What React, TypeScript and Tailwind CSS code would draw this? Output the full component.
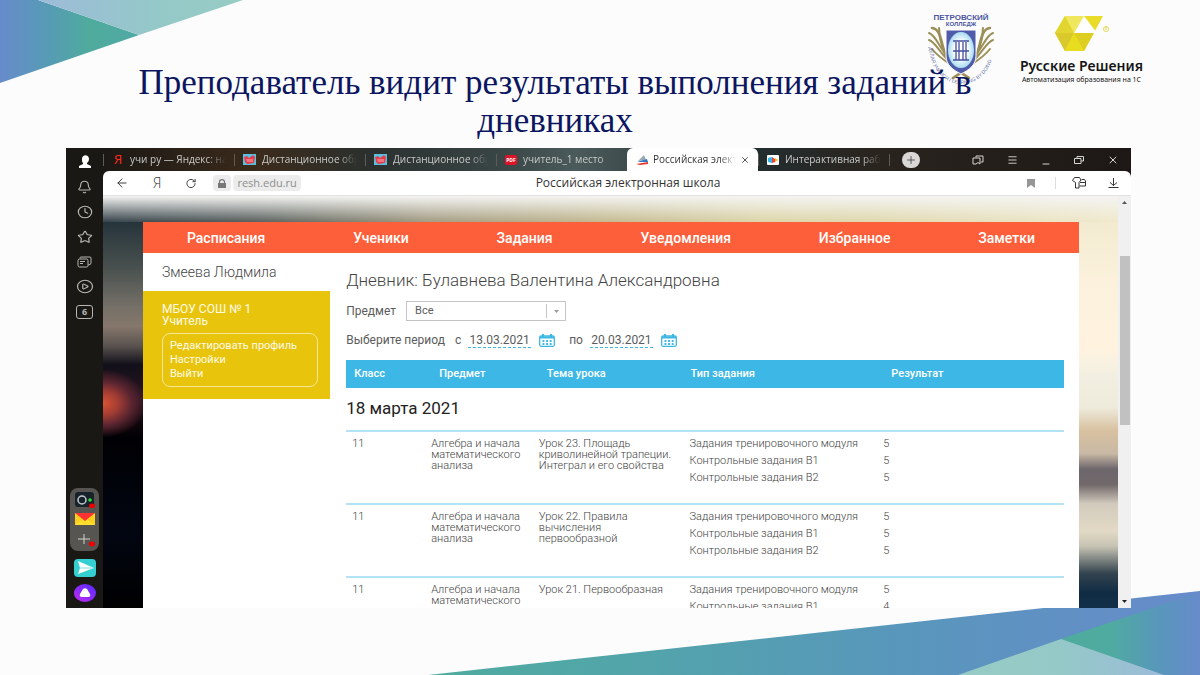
import { ReactNode } from 'react';
import { Bell, Clock, Star, CirclePlay, Plus, Menu, X, ArrowLeft, RotateCw, Download, Minus } from 'lucide-react';

const navItems = ['Расписания', 'Ученики', 'Задания', 'Уведомления', 'Избранное', 'Заметки'];

const lessons = [
    { grade: 11, subject: 'Алгебра и начала математического анализа', topic: 'Урок 23. Площадь криволинейной трапеции. Интеграл и его свойства', results: [5, 5, 5] },
    { grade: 11, subject: 'Алгебра и начала математического анализа', topic: 'Урок 22. Правила вычисления первообразной', results: [5, 5, 5] },
    { grade: 11, subject: 'Алгебра и начала математического анализа', topic: 'Урок 21. Первообразная', results: [5, 4, 5] },
];

const tasks = ['Задания тренировочного модуля', 'Контрольные задания В1', 'Контрольные задания В2'];

function Backdrop() {
    return (
        <>
            <svg className="absolute left-0 top-0 h-[84px] w-[244px]" viewBox="0 0 244 84" aria-hidden="true">
                <defs>
                    <linearGradient id="cornerDark">
                        <stop offset="0" stopColor="#678bcb" />
                        <stop offset="0.35" stopColor="#569bb5" />
                        <stop offset="0.65" stopColor="#4fab9c" />
                        <stop offset="1" stopColor="#50a9a6" />
                    </linearGradient>
                    <linearGradient id="cornerLight">
                        <stop offset="0" stopColor="#9dbbd9" />
                        <stop offset="0.6" stopColor="#94c9c8" />
                        <stop offset="1" stopColor="#97cbc4" />
                    </linearGradient>
                </defs>
                <path d="M0 0H38L139 35L0 83Z" fill="url(#cornerDark)" />
                <path d="M38 0H243L139 35Z" fill="url(#cornerLight)" />
            </svg>
            <svg className="absolute bottom-0 right-0 h-[85px] w-[772px]" viewBox="428 590 772 85" aria-hidden="true">
                <defs>
                    <linearGradient id="waveMain">
                        <stop offset="0" stopColor="#4fab9f" />
                        <stop offset="0.25" stopColor="#52a5a9" />
                        <stop offset="0.6" stopColor="#5897bb" />
                        <stop offset="1" stopColor="#678bcb" />
                    </linearGradient>
                    <linearGradient id="waveSide">
                        <stop offset="0" stopColor="#4fab9c" />
                        <stop offset="0.35" stopColor="#4fab9f" />
                        <stop offset="0.7" stopColor="#5897bb" />
                        <stop offset="1" stopColor="#678bcb" />
                    </linearGradient>
                    <linearGradient id="waveLight">
                        <stop offset="0" stopColor="#97cbc4" />
                        <stop offset="0.5" stopColor="#94c9c8" />
                        <stop offset="1" stopColor="#9dbbd9" />
                    </linearGradient>
                </defs>
                <path d="M428 675L1200 591V675Z" fill="url(#waveMain)" />
                <path d="M1061 639L1200 592V675H1130Z" fill="url(#waveSide)" />
                <path d="M958 675L1061 639L1164 675Z" fill="url(#waveLight)" />
            </svg>
        </>
    );
}

function CollegeEmblem() {
    return (
        <svg className="h-20 w-[76px]" viewBox="0 0 76 80" role="img" aria-label="Петровский колледж">
            <defs>
                <path id="motto" d="M3 33C3 61 20 74 35 74C52 74 68 61 68 33" />
                <radialGradient id="shieldGlow">
                    <stop offset="0.5" stopColor="#fff" />
                    <stop offset="1" stopColor="#a6dcf1" />
                </radialGradient>
            </defs>
            <g fill="#4c579f" fontFamily="Liberation Sans, sans-serif" fontWeight="700" textAnchor="middle">
                <text x="35" y="10" fontSize="8">ПЕТРОВСКИЙ</text>
                <text x="35" y="16" fontSize="6">КОЛЛЕДЖ</text>
            </g>
            <g transform="translate(-3 -2)">
                <g fill="none" stroke="#9b8f57" strokeLinecap="round">
                    <path d="M9 20C19 21 18 38 23 48C27 58 37 64 46 70" strokeWidth="2.6" />
                    <path d="M6 25C12 27 15 36 21 44M6 32C12 34 16 43 24 51M9 41C13 46 19 51 27 56M16 20C17 25 15 29 21 42" strokeWidth="2" />
                    <path d="M67 20C57 21 58 38 53 48C49 58 39 64 30 70" strokeWidth="2.6" />
                    <path d="M70 25C64 27 61 36 55 44M70 32C64 34 60 43 52 51M67 41C63 46 57 51 49 56M60 20C59 25 61 29 55 42" strokeWidth="2" />
                </g>
                <path d="M23 22H53V48C53 57 46 62 38 66C30 62 23 57 23 48Z" fill="#515bac" stroke="#fff" strokeWidth="1" />
                <ellipse cx="38" cy="42" rx="13" ry="18" fill="url(#shieldGlow)" />
                <path d="M30 33H46M30 52H46M33 34V52M36 34V52M40 34V52M43 34V52M30 43H46" fill="none" stroke="#454fa0" strokeWidth="1.3" />
            </g>
            <text fill="#7077aa" fontFamily="Liberation Sans, sans-serif" fontSize="5">
                <textPath href="#motto" startOffset="4">ДЕЛАЯ УЧИМСЯ / LEARNING BY DOING</textPath>
            </text>
        </svg>
    );
}

function CompanyLogo() {
    return (
        <div className="flex flex-col items-center font-['Noto_Sans',sans-serif] text-[#141414]">
            <svg className="ml-1 h-9 w-14" viewBox="0 0 56 36" aria-hidden="true">
                <path d="M10 0H48L29 35H10L0 17Z" fill="#e8dc28" />
                <path d="M10 0L19 17H0Z" fill="#e3d52f" />
                <path d="M10 0H29L19 17Z" fill="#efe75e" />
                <path d="M0 17H19L10 35Z" fill="#d9c92d" />
                <path d="M19 17L29 35H10Z" fill="#e9dd1f" />
                <path d="M19 17H39L29 35Z" fill="#dfce22" />
                <path d="M29 0L42 17H19Z" fill="#fff" />
                <circle cx="51" cy="13" r="2.6" fill="none" stroke="#e3d64c" strokeWidth="0.8" />
                <path d="M50.200 14.500V11.500H52V13H50.500L52 14.500" fill="none" stroke="#e3d64c" strokeWidth="0.6" />
            </svg>
            <strong className="mt-1 text-sm leading-5 font-semibold whitespace-nowrap">Русские Решения</strong>
            <span className="text-[7px] leading-2 whitespace-nowrap">Автоматизация образования на 1С</span>
        </div>
    );
}

function SideIcon({ label, children }: { label: string; children: ReactNode }) {
    return (
        <button aria-label={label} className="flex h-[25px] items-center justify-center text-[#b8b6b2]">
            {children}
        </button>
    );
}

function BrowserSidebar() {
    return (
        <aside className="flex w-[37px] shrink-0 flex-col items-stretch bg-[#1a1814] pt-px pb-[3px]">
            <SideIcon label="Профиль">
                <svg className="h-[13px] w-3" viewBox="0 0 12 13" fill="#fff"><path d="M3 4C3-1 10-1 10 4C10 6 9 7 8 8V9L12 11V13H0V11L4 9V8C3 7 3 6 3 4Z" /></svg>
            </SideIcon>
            <SideIcon label="Уведомления"><Bell className="h-[14px] w-[15px]" strokeWidth={1.8} preserveAspectRatio="none" /></SideIcon>
            <SideIcon label="История"><Clock className="h-[14px] w-4" strokeWidth={1.8} preserveAspectRatio="none" /></SideIcon>
            <SideIcon label="Избранное"><Star className="h-[14px] w-4" strokeWidth={1.8} preserveAspectRatio="none" /></SideIcon>
            <SideIcon label="Коллекции">
                <svg className="h-3 w-[15px]" viewBox="0 0 15 12" fill="none" stroke="currentColor"><rect x="1" y="3" width="10" height="8" rx="1.5" /><path d="M3 2.5V2Q3 1 4 1H13Q14 1 14 2V7Q14 9 11 9M3 5.5H8M3 7.5H6" /></svg>
            </SideIcon>
            <SideIcon label="Видео"><CirclePlay className="h-[15px] w-[18px]" strokeWidth={1.6} preserveAspectRatio="none" /></SideIcon>
            <SideIcon label="Открытые вкладки">
                <span className="flex h-[14px] w-[17px] items-center justify-center rounded-[3px] border border-current text-[9px] leading-3 font-bold">6</span>
            </SideIcon>
            <div className="mx-1 mt-auto mb-1 flex h-[63px] flex-col items-center justify-around rounded-lg bg-[#575551] py-px">
                <button aria-label="Камера">
                    <svg className="h-4 w-5" viewBox="0 0 20 16"><rect width="19" height="15" rx="3" fill="#17222b" /><circle cx="7" cy="8" r="4" fill="none" stroke="#c3ccd1" strokeWidth="1.5" /><circle cx="15" cy="8" r="1.8" fill="#23e03b" /><ellipse cx="17" cy="14" rx="3" ry="2.4" fill="#f10000" /></svg>
                </button>
                <button aria-label="Почта">
                    <svg className="h-3 w-5" viewBox="0 0 20 12"><path d="M0 0H20V12H0Z" fill="#ffcf1f" /><path d="M0 12L10 5L20 12Z" fill="#ffdf2b" /><path d="M0 0H20L10 8Z" fill="#f33" /></svg>
                </button>
                <button aria-label="Добавить">
                    <svg className="h-4 w-5" viewBox="0 0 20 16"><path d="M3 8H15M9 3V13" stroke="#d4d2cf" /><ellipse cx="17" cy="13" rx="3" ry="2.4" fill="#f10000" /></svg>
                </button>
            </div>
            <SideIcon label="Мессенджер">
                <svg className="h-[18px] w-[22px]" viewBox="0 0 22 18"><rect width="22" height="18" rx="4" fill="#34cfd0" /><path d="M4 2L20 9L4 15L6 9Z" fill="#fff" /><path d="M6 9H20" stroke="#7ce0e0" /></svg>
            </SideIcon>
            <SideIcon label="Алиса">
                <svg className="h-[18px] w-[22px]" viewBox="0 0 22 18">
                    <defs><linearGradient id="alice" y1="1" x2="0.8" y2="0"><stop stopColor="#c22af0" /><stop offset="1" stopColor="#5c2bff" /></linearGradient></defs>
                    <ellipse cx="11" cy="9" rx="11" ry="9" fill="url(#alice)" /><path d="M9 5Q11 3.500 13 5L16 10Q17 13 14 13H8Q5 13 6 10Z" fill="#fff" />
                </svg>
            </SideIcon>
        </aside>
    );
}

function Tab({ title, icon }: { title: string; icon: ReactNode }) {
    return (
        <button className="flex h-[23px] min-w-0 max-w-[131px] flex-1 items-center pr-2 text-[#c9cac8]">
            <span className="mr-2 h-3 w-px bg-[#5d5c57]" />
            {icon}
            <span className="ml-[6px] min-w-0 flex-1 overflow-hidden whitespace-nowrap text-left [mask-image:linear-gradient(to_right,black_80%,transparent)]">{title}</span>
        </button>
    );
}

function UchiIcon() {
    return (
        <svg className="h-[11px] w-[13px] shrink-0" viewBox="0 0 13 11">
            <path d="M0 0H13V11H0Z" fill="#5bc0df" />
            <path d="M1 3L4 2L6 4L10 1L12 3L11 9L4 10L2 8Z" fill="#e63c4c" />
            <path d="M3 5H10V8H4Z" fill="#f0767c" />
        </svg>
    );
}

function TabStrip() {
    return (
        <div className="flex h-[23px] text-[10px] font-['Open_Sans','Noto_Sans',sans-serif]">
            <Tab title="учи ру — Яндекс: на" icon={<b className="w-3 text-center text-[13px] font-normal text-[#ff2b1c]">Я</b>} />
            <Tab title="Дистанционное обр" icon={<UchiIcon />} />
            <Tab title="Дистанционное обр" icon={<UchiIcon />} />
            <Tab
                title="учитель_1 место"
                icon={<span className="h-[10px] w-3 shrink-0 rounded-[2px] bg-[#dd1327] text-center text-[5px] leading-[10px] font-bold text-white">PDF</span>}
            />
            <div className="flex h-[23px] min-w-0 max-w-[131px] flex-1 items-center gap-1 rounded-t-md bg-white pl-[9px] pr-2 text-[#333]">
                <svg className="h-[10px] w-[13px] shrink-0" viewBox="0 0 13 10"><path d="M2 6L8 0L10 5Z" fill="#9aa7b5" /><path d="M1 7L11 4L12 7Z" fill="#2c78c4" /><path d="M0 9L12 7V9L4 10Z" fill="#e6392c" /></svg>
                <span className="min-w-0 flex-1 overflow-hidden whitespace-nowrap [mask-image:linear-gradient(to_right,black_80%,transparent)]">Российская элект</span>
                <button aria-label="Закрыть вкладку"><X className="size-[10px]" /></button>
            </div>
            <Tab
                title="Интерактивная рабо"
                icon={<svg className="h-[10px] w-3 shrink-0" viewBox="0 0 12 10"><rect width="12" height="10" rx="1" fill="#fff" /><path d="M1 3L5 2V8L1 7Z" fill="#39b5e8" /><path d="M5 2L8 4V7L5 8Z" fill="#e8493e" /><path d="M8 3L11 5L8 7Z" fill="#f2b51d" /></svg>}
            />
            <div className="flex flex-1 items-center pr-3 text-[#d7d5d2]">
                <span className="mr-3 h-3 w-px bg-[#5d5c57]" />
                <button aria-label="Новая вкладка" className="flex h-4 w-[18px] items-center justify-center rounded-full bg-[#d9d8d6] text-[#333]"><Plus className="size-3" strokeWidth={1.5} /></button>
                <div className="ml-auto flex items-center gap-[23px]">
                    <button aria-label="Коллекции">
                        <svg className="h-[10px] w-3" viewBox="0 0 12 10" fill="none" stroke="currentColor"><path d="M4 2.500V1H11V7H9M1 3H8V9L6 7.500L4 9H1Z" /></svg>
                    </button>
                    <button aria-label="Меню"><Menu className="h-3 w-[11px]" strokeWidth={2} /></button>
                    <button aria-label="Свернуть" className="pt-2"><Minus className="h-2 w-[10px]" strokeWidth={3} preserveAspectRatio="none" /></button>
                    <button aria-label="Развернуть">
                        <svg className="h-2 w-[10px]" viewBox="0 0 10 8" fill="none" stroke="currentColor"><path d="M3 2.500V0.500H9.500V5H7M0.500 2.500H7V7.500H0.500Z" /></svg>
                    </button>
                    <button aria-label="Закрыть"><X className="size-3" /></button>
                </div>
            </div>
        </div>
    );
}

function AddressBar() {
    return (
        <div className="flex h-[25px] items-center rounded-t-md border-b border-[#e2e2e2] bg-white px-3 font-['Open_Sans','Noto_Sans',sans-serif] text-[#333]">
            <div className="flex flex-1 items-center">
                <button aria-label="Назад" className="mr-6"><ArrowLeft className="size-[14px]" strokeWidth={1.6} /></button>
                <button aria-label="Яндекс" className="mr-6 text-sm leading-5 font-light">Я</button>
                <button aria-label="Обновить" className="mr-4"><RotateCw className="h-[11px] w-3" strokeWidth={2} /></button>
                <span className="mr-[2px] flex h-4 w-[18px] items-center justify-center rounded bg-[#ececec]">
                    <svg className="h-[9px] w-2" viewBox="0 0 8 9"><path d="M0 4H8V9H0Z" fill="#777" /><path d="M1.500 4V3Q1.500 0.600 4 0.600Q6.500 0.600 6.500 3V4" fill="none" stroke="#777" strokeWidth="1.200" /></svg>
                </span>
                <a href="#resh" className="rounded bg-[#ececec] px-1 text-[11px] leading-4 text-[#8c8c8c]">resh.edu.ru</a>
            </div>
            <div className="ml-[22px] text-xs">Российская электронная школа</div>
            <div className="flex flex-1 items-center justify-end">
                <button aria-label="Закладка" className="mr-5"><svg className="h-[9px] w-2" viewBox="0 0 8 9" fill="#969696"><path d="M0 0H8V9L4 6L0 9Z" /></svg></button>
                <span className="mr-4 h-3 w-px bg-[#ddd]" />
                <button aria-label="Расширения" className="mr-[22px]">
                    <svg className="h-3 w-[14px]" viewBox="0 0 14 12" fill="none" stroke="currentColor"><path d="M2.500 0.500H7.500L9 3L7 5.500V11H3.500V5.500L0.500 3.500ZM9 3.500L10 2.500H12.500L13.500 4V9H7.500M8 5.500H13" /></svg>
                </button>
                <button aria-label="Загрузки">
                    <svg className="h-[10px] w-[11px]" viewBox="0 0 11 10" fill="none" stroke="currentColor"><path d="M5.500 0V7.500M2 4.500L5.500 7.500L9 4.500M0.500 9.500H10.500" /></svg>
                </button>
            </div>
        </div>
    );
}

function CalendarIcon() {
    return (
        <svg className="h-[13px] w-4" viewBox="0 0 16 13">
            <rect x="0.700" y="2" width="14.600" height="10.300" rx="1.500" fill="#fff" stroke="#3db7e4" strokeWidth="1.300" />
            <path d="M1 3.500H15M4 0V3M12 0V3" stroke="#3db7e4" strokeWidth="2" />
            <path d="M3.500 7H13M3.500 10H13" stroke="#3db7e4" strokeWidth="1.800" strokeDasharray="1.900 1.700" />
        </svg>
    );
}

function DateField({ id, label, value }: { id: string; label: string; value: string }) {
    return (
        <div className="flex items-center">
            <label htmlFor={id} className="mr-[7px]">{label}</label>
            <input id={id} defaultValue={value} className="mr-2 h-4 w-[63px] border-b border-dashed border-[#3db7e4] bg-transparent text-center text-xs outline-none" />
            <button aria-label="Открыть календарь"><CalendarIcon /></button>
        </div>
    );
}

function Diary() {
    return (
        <main className="min-w-0 flex-1 pt-[17px] pr-[15px] pl-4">
            <h2 className="text-[17px] leading-5 font-light">Дневник: Булавнева Валентина Александровна</h2>
            <div className="mt-[11px] flex items-center gap-[10px] text-xs leading-5 text-[#5c5c5c]">
                <label htmlFor="subject">Предмет</label>
                <div className="relative">
                    <select id="subject" className="block h-5 w-40 appearance-none border border-[#c4c4c4] bg-white pl-2 text-[11px] leading-4 outline-none">
                        <option>Все</option>
                    </select>
                    <span className="pointer-events-none absolute inset-y-[3px] right-0 flex w-5 items-center justify-center border-l border-[#c4c4c4]">
                        <svg className="h-[3px] w-[5px]" viewBox="0 0 5 3" fill="#999"><path d="M0 0H5L2.500 3Z" /></svg>
                    </span>
                </div>
            </div>
            <div className="mt-[9px] flex items-center text-xs leading-5 text-[#5c5c5c]">
                <span className="mr-[10px]">Выберите период</span>
                <DateField id="from" label="с" value="13.03.2021" />
                <span className="w-[14px]" />
                <DateField id="to" label="по" value="20.03.2021" />
            </div>
            <table className="mt-[10px] w-full table-fixed border-collapse text-left text-[11px] font-light">
                <colgroup>
                    <col className="w-[11%]" />
                    <col className="w-[15%]" />
                    <col className="w-[21%]" />
                    <col className="w-[27%]" />
                    <col className="w-[26%]" />
                </colgroup>
                <thead>
                    <tr className="h-7 bg-[#3db7e6] text-white">
                        <th className="pl-2 font-medium">Класс</th>
                        <th className="pl-[14px] font-medium">Предмет</th>
                        <th className="pl-[14px] font-medium">Тема урока</th>
                        <th className="pl-[7px] font-medium">Тип задания</th>
                        <th className="pl-[14px] font-medium">Результат</th>
                    </tr>
                </thead>
                <tbody>
                    <tr className="h-[43px]">
                        <th colSpan={5} className="text-[17px] font-normal text-[#222]">18 марта 2021</th>
                    </tr>
                    {lessons.map((lesson) => (
                        <tr key={lesson.topic} className="h-[73px] border-t-2 border-[#b5e3f6] align-top text-[#444] [&>td]:pl-[6px]">
                            <td className="pt-[6px] leading-[11px]">{lesson.grade}</td>
                            <td className="pt-[6px] leading-[11px]">{lesson.subject}</td>
                            <td className="pt-[6px] pr-2 leading-[11px]">{lesson.topic}</td>
                            <td className="pt-[3px] leading-[17px]">{tasks.map((task) => <div key={task}>{task}</div>)}</td>
                            <td className="pt-[3px] leading-[17px]">{lesson.results.map((result, i) => <div key={i}>{result}</div>)}</td>
                        </tr>
                    ))}
                </tbody>
            </table>
        </main>
    );
}

function Profile() {
    return (
        <aside className="w-1/5 shrink-0">
            <div className="pl-[19px] text-sm leading-[38px] font-light">Змеева Людмила</div>
            <div className="bg-[#e9c40c] py-3 pr-3 pl-[19px] text-[#fffbe6]">
                <p className="text-xs leading-3">МБОУ СОШ № 1</p>
                <p className="text-xs leading-3">Учитель</p>
                <div className="mt-[6px] flex flex-col rounded-lg border border-[#f6e69b] py-[5px] pl-[7px] text-[11px] leading-[14px]">
                    <a href="#profile">Редактировать профиль</a>
                    <a href="#settings">Настройки</a>
                    <a href="#logout">Выйти</a>
                </div>
            </div>
        </aside>
    );
}

function SitePage() {
    return (
        <div className="flex min-h-0 flex-1">
            <div className="flex min-w-0 flex-1 flex-col">
                <div className="h-[26px] shrink-0 bg-[linear-gradient(to_bottom,#f4f4f2,#f4f4f200),linear-gradient(to_right,#36434b,#59605e_15%,#a39c83_32%,#c2b78f_48%,#ddd5a9_65%,#dfd8ae_75%,#f0e9cc)]" />
                <div className="flex min-h-0 flex-1">
                    <div className="w-10 shrink-0 bg-[radial-gradient(44px_34px_at_0%_47%,#d95334,#a23c33_35%,#5a2530_65%,transparent),linear-gradient(to_bottom,#26343b,#49514f_12%,#757068_22%,#86776b_27%,#5b5350_32%,#11101a_37%,#2a1420_46%,#10060c_52%,#000004_56%,#020611_80%,#000001)]" />
                    <div className="flex min-w-0 flex-1 flex-col bg-white text-[#444] font-[Roboto,sans-serif]">
                        <nav className="flex h-[31px] shrink-0 items-center justify-around bg-[#fd5f3a] text-sm font-medium text-white">
                            {navItems.map((item) => <a key={item} href="#nav">{item}</a>)}
                        </nav>
                        <div className="flex">
                            <Profile />
                            <Diary />
                        </div>
                    </div>
                    <div className="w-[39px] shrink-0 bg-[linear-gradient(to_bottom,#f2ebd0,#fbf1dc_15%,#fff3e0_33%,#f2efe2_40%,#eeebdc_48%,#d8c1a0_54%,#c8b8a5_60%,#6d666b_64%,#71686a_68%,#d2cbbd_73%,#e2dac5_80%,#c7c3b3_84%,#33444f_91%,#102c44_96%,#122f4a)]" />
                </div>
            </div>
            <div className="flex w-[13px] shrink-0 flex-col items-center bg-[#f0f0f0] py-1">
                <svg className="h-[5px] w-[5px]" viewBox="0 0 5 5" fill="#555"><path d="M0 4L2.500 1L5 4Z" /></svg>
                <div className="flex-[51]" />
                <div className="w-[10px] flex-[168] bg-[#c1c1c1]" />
                <div className="flex-[173]" />
                <svg className="h-[5px] w-[5px]" viewBox="0 0 5 5" fill="#222"><path d="M0 1L2.500 4L5 1Z" /></svg>
            </div>
        </div>
    );
}

export default function App() {
    return (
        <div className="relative flex h-screen flex-col overflow-hidden bg-[#fcfcfc] pb-[67px]">
            <Backdrop />
            <header className="relative h-[148px] shrink-0">
                <div className="absolute top-[10px] right-[57px] flex items-start gap-[18px]">
                    <CollegeEmblem />
                    <div className="pt-[6px]"><CompanyLogo /></div>
                </div>
                <h1 className="relative pt-[64px] pr-[222px] pl-[132px] text-center font-['Liberation_Serif',serif] text-[35px] leading-[38px] text-[#0b1560]">
                    Преподаватель видит результаты выполнения заданий в дневниках
                </h1>
            </header>
            <div className="relative mr-[69px] ml-[66px] flex min-h-0 flex-1 overflow-hidden">
                <BrowserSidebar />
                <div className="flex min-w-0 flex-1 flex-col bg-[linear-gradient(to_right,#1b1815,#3b2b1b_15%,#2b302e_26%,#384444_38%,#4b5a5b_46%,#222e31_62%,#2a241f_75%,#1d1815)]">
                    <TabStrip />
                    <AddressBar />
                    <SitePage />
                </div>
            </div>
        </div>
    );
}
